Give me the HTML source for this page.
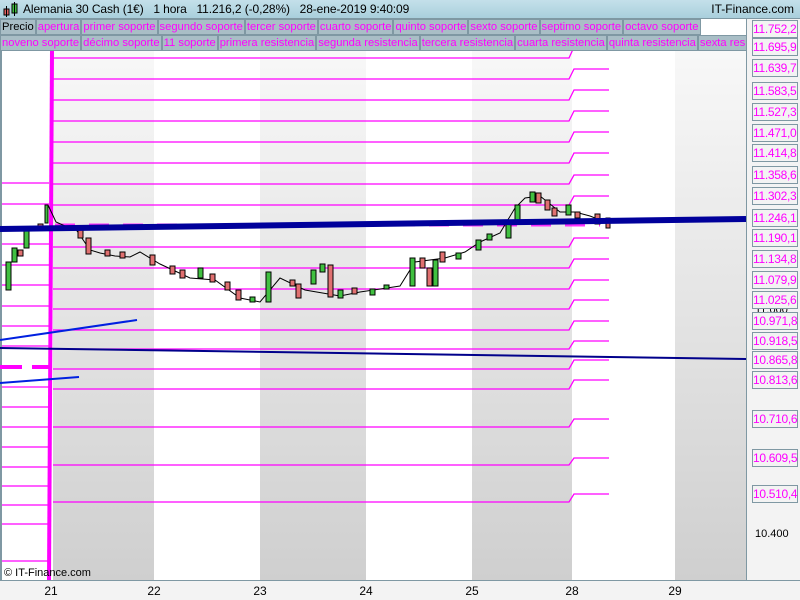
<!DOCTYPE html>
<html><head><meta charset="utf-8"><style>
*{margin:0;padding:0;box-sizing:border-box}
body{width:800px;height:600px;overflow:hidden;background:#fff;font-family:"Liberation Sans",sans-serif;position:relative}
#hdr{position:absolute;left:0;top:0;width:800px;height:19px;background:linear-gradient(#c4e0ea,#a9cfdc);border-bottom:1px solid #7f98a3;font-size:12px;line-height:19px}
.row{position:absolute;left:0;width:746px;height:16px;background:#fff;white-space:nowrap;overflow:hidden;font-size:11.2px;line-height:14px}
.row span{display:inline-block;background:#a9bec6;border:1px solid #7f98a3;color:#f0f;padding:0 1px;height:16px}
.lab{position:absolute;left:752px;width:46px;height:18px;border:1px solid #7f98a3;background:#f3f3f3;color:#f0f;font-size:12px;line-height:16px;text-align:right;padding-right:1px;letter-spacing:-0.3px}
.bx{position:absolute;top:584px;font-size:12px;width:30px;text-align:center}
</style></head><body>
<div id="hdr"><svg style="position:absolute;left:3px;top:2px" width="16" height="16"><rect x="1" y="7" width="5" height="6" fill="#e06060" stroke="#000"/><line x1="3.5" y1="4" x2="3.5" y2="15" stroke="#000"/><rect x="9" y="2" width="5" height="9" fill="#40c040" stroke="#000"/><line x1="11.5" y1="0" x2="11.5" y2="14" stroke="#000"/></svg>
<span style="position:absolute;left:23px;letter-spacing:-0.1px">Alemania 30 Cash (1€)&nbsp;&nbsp;&nbsp;1 hora&nbsp;&nbsp;&nbsp;11.216,2 (-0,28%)&nbsp;&nbsp;&nbsp;28-ene-2019 9:40:09</span>
<span style="position:absolute;right:6px">IT-Finance.com</span></div>
<div class="row" style="top:19px;width:746px"><span style="color:#000">Precio</span><span>apertura</span><span>primer soporte</span><span>segundo soporte</span><span>tercer soporte</span><span>cuarto soporte</span><span>quinto soporte</span><span>sexto soporte</span><span>septimo soporte</span><span>octavo soporte</span></div>
<div class="row" style="top:35px"><span>noveno soporte</span><span>décimo soporte</span><span>11 soporte</span><span>primera resistencia</span><span>segunda resistencia</span><span>tercera resistencia</span><span>cuarta resistencia</span><span>quinta resistencia</span><span>sexta resistencia</span></div>
<svg style="position:absolute;left:0;top:51px" width="746" height="529" viewBox="0 51 746 529">
<defs><linearGradient id="g" x1="0" y1="0" x2="0" y2="1"><stop offset="0" stop-color="#f8f8f8"/><stop offset="1" stop-color="#cfcfcf"/></linearGradient></defs>
<rect x="53" y="51" width="101" height="529" fill="url(#g)"/>
<rect x="260" y="51" width="106" height="529" fill="url(#g)"/>
<rect x="472" y="51" width="100" height="529" fill="url(#g)"/>
<rect x="675" y="51" width="71" height="529" fill="url(#g)"/>
<rect x="0" y="51" width="2" height="529" fill="#7f98a3"/>
<g stroke="#f0f" stroke-width="1.3">
<line x1="2" y1="183" x2="49" y2="183"/><line x1="2" y1="204" x2="49" y2="204"/><line x1="2" y1="244" x2="49" y2="244"/><line x1="2" y1="265" x2="49" y2="265"/><line x1="2" y1="285" x2="49" y2="285"/><line x1="2" y1="306" x2="49" y2="306"/><line x1="2" y1="326" x2="49" y2="326"/><line x1="2" y1="346" x2="49" y2="346"/><line x1="2" y1="387" x2="49" y2="387"/><line x1="2" y1="407" x2="49" y2="407"/><line x1="2" y1="427" x2="49" y2="427"/><line x1="2" y1="447" x2="49" y2="447"/><line x1="2" y1="467" x2="49" y2="467"/><line x1="2" y1="486" x2="49" y2="486"/><line x1="2" y1="505" x2="49" y2="505"/><line x1="2" y1="524" x2="49" y2="524"/><line x1="2" y1="561" x2="49" y2="561"/>
</g>
<g fill="none" stroke="#f0f" stroke-width="1.3">
<polyline points="53,58 569,58 574,47 609,47"/>
<polyline points="53,79 569,79 574,69 609,69"/>
<polyline points="53,100 569,100 574,90 609,90"/>
<polyline points="53,121 569,121 574,111 609,111"/>
<polyline points="53,142 569,142 574,132 609,132"/>
<polyline points="53,163 569,163 574,153 609,153"/>
<polyline points="53,184 569,184 574,175 609,175"/>
<polyline points="53,205 569,205 574,196 609,196"/>
<polyline points="53,247 569,247 574,238 609,238"/>
<polyline points="53,268 569,268 574,259 609,259"/>
<polyline points="53,289 569,289 574,280 609,280"/>
<polyline points="53,309 569,309 574,300 609,300"/>
<polyline points="53,330 569,330 574,321 609,321"/>
<polyline points="53,349 569,349 574,341 609,341"/>
<polyline points="53,369 569,369 574,360 609,360"/>
<polyline points="53,389 569,389 574,380 609,380"/>
<polyline points="53,427 569,427 574,419 609,419"/>
<polyline points="53,465 569,465 574,458 609,458"/>
<polyline points="53,502 569,502 574,494 609,494"/>
</g>
<polygon points="50,51 54,51 51,580 47,580" fill="#f0f"/>
<line x1="0" y1="367" x2="50" y2="367" stroke="#f0f" stroke-width="4" stroke-dasharray="22,10"/>
<line x1="55" y1="225" x2="600" y2="225" stroke="#f0f" stroke-width="3" stroke-dasharray="20,14" opacity=".8"/>
<line x1="0" y1="340" x2="137" y2="320" stroke="#0020e0" stroke-width="2"/>
<line x1="0" y1="383" x2="79" y2="377" stroke="#0020e0" stroke-width="2"/>
<line x1="0" y1="348" x2="746" y2="359" stroke="#00008b" stroke-width="2"/>
<polyline fill="none" stroke="#000" stroke-width="1" points="48,205 56,222 65,226 75,228 90,250 100,253 115,256 130,257 140,252 160,264 190,278 215,280 240,298 260,302 280,278 305,290 340,296 360,292 400,286 415,262 445,258 465,252 480,242 500,233 515,208 525,198 540,196 560,212 575,212 590,216 610,224"/>
<g stroke="#000" stroke-width="1">
<g fill="#40c040">
<rect x="6" y="262" width="5" height="28"/><rect x="12" y="248" width="5" height="14"/><rect x="24" y="230" width="5" height="18"/><rect x="45" y="205" width="3" height="18"/><rect x="266" y="272" width="5" height="30"/><rect x="311" y="270" width="5" height="14"/><rect x="320" y="264" width="5" height="8"/><rect x="338" y="290" width="5" height="8"/><rect x="370" y="289" width="5" height="6"/><rect x="384" y="285" width="5" height="4"/><rect x="410" y="258" width="5" height="28"/><rect x="433" y="260" width="5" height="26"/><rect x="456" y="253" width="5" height="6"/><rect x="476" y="240" width="5" height="10"/><rect x="487" y="234" width="5" height="6"/><rect x="506" y="220" width="5" height="18"/><rect x="515" y="205" width="5" height="15"/><rect x="530" y="192" width="5" height="10"/><rect x="566" y="205" width="5" height="10"/><rect x="198" y="268" width="5" height="10"/><rect x="250" y="297" width="5" height="5"/>
</g>
<g fill="#e07070">
<rect x="18" y="250" width="5" height="6"/><rect x="38" y="224" width="5" height="4"/><rect x="78" y="230" width="5" height="8"/><rect x="86" y="238" width="5" height="16"/><rect x="105" y="250" width="5" height="6"/><rect x="120" y="252" width="5" height="6"/><rect x="150" y="255" width="5" height="10"/><rect x="170" y="266" width="5" height="8"/><rect x="180" y="270" width="5" height="8"/><rect x="210" y="274" width="5" height="8"/><rect x="225" y="282" width="5" height="8"/><rect x="236" y="290" width="5" height="10"/><rect x="290" y="280" width="5" height="6"/><rect x="296" y="284" width="5" height="14"/><rect x="328" y="265" width="5" height="32"/><rect x="352" y="288" width="5" height="6"/><rect x="420" y="258" width="5" height="10"/><rect x="427" y="268" width="5" height="18"/><rect x="440" y="252" width="5" height="10"/><rect x="536" y="193" width="5" height="10"/><rect x="545" y="200" width="5" height="10"/><rect x="552" y="208" width="5" height="8"/><rect x="575" y="212" width="5" height="6"/><rect x="595" y="214" width="5" height="10"/><rect x="606" y="218" width="4" height="10"/>
</g>
</g>
<line x1="0" y1="229" x2="746" y2="219" stroke="#00009b" stroke-width="6"/>
</svg>
<div style="position:absolute;left:746px;top:19px;width:54px;height:561px;background:#f3f3f3;border-left:1px solid #7f98a3"></div>
<div style="position:absolute;left:0;top:580px;width:800px;height:20px;background:#f3f3f3;border-top:1px solid #7f98a3"></div>
<div style="position:absolute;left:4px;top:567px;font-size:11px">© IT-Finance.com</div>
<div class="bx" style="left:36px">21</div><div class="bx" style="left:139px">22</div><div class="bx" style="left:245px">23</div><div class="bx" style="left:351px">24</div><div class="bx" style="left:457px">25</div><div class="bx" style="left:557px">28</div><div class="bx" style="left:660px">29</div>
<div style="position:absolute;left:755px;top:304px;font-size:11px">11.000</div>
<div style="position:absolute;left:755px;top:528px;font-size:11px">10.400</div>
<div class="lab" style="top:20px">11.752,2</div><div class="lab" style="top:38px">11.695,9</div><div class="lab" style="top:59px">11.639,7</div><div class="lab" style="top:82px">11.583,5</div><div class="lab" style="top:103px">11.527,3</div><div class="lab" style="top:124px">11.471,0</div><div class="lab" style="top:144px">11.414,8</div><div class="lab" style="top:166px">11.358,6</div><div class="lab" style="top:187px">11.302,3</div><div class="lab" style="top:209px">11.246,1</div><div class="lab" style="top:229px">11.190,1</div><div class="lab" style="top:250px">11.134,8</div><div class="lab" style="top:271px">11.079,9</div><div class="lab" style="top:291px">11.025,6</div><div class="lab" style="top:312px">10.971,8</div><div class="lab" style="top:332px">10.918,5</div><div class="lab" style="top:351px">10.865,8</div><div class="lab" style="top:371px">10.813,6</div><div class="lab" style="top:410px">10.710,6</div><div class="lab" style="top:449px">10.609,5</div><div class="lab" style="top:485px">10.510,4</div>
</body></html>
